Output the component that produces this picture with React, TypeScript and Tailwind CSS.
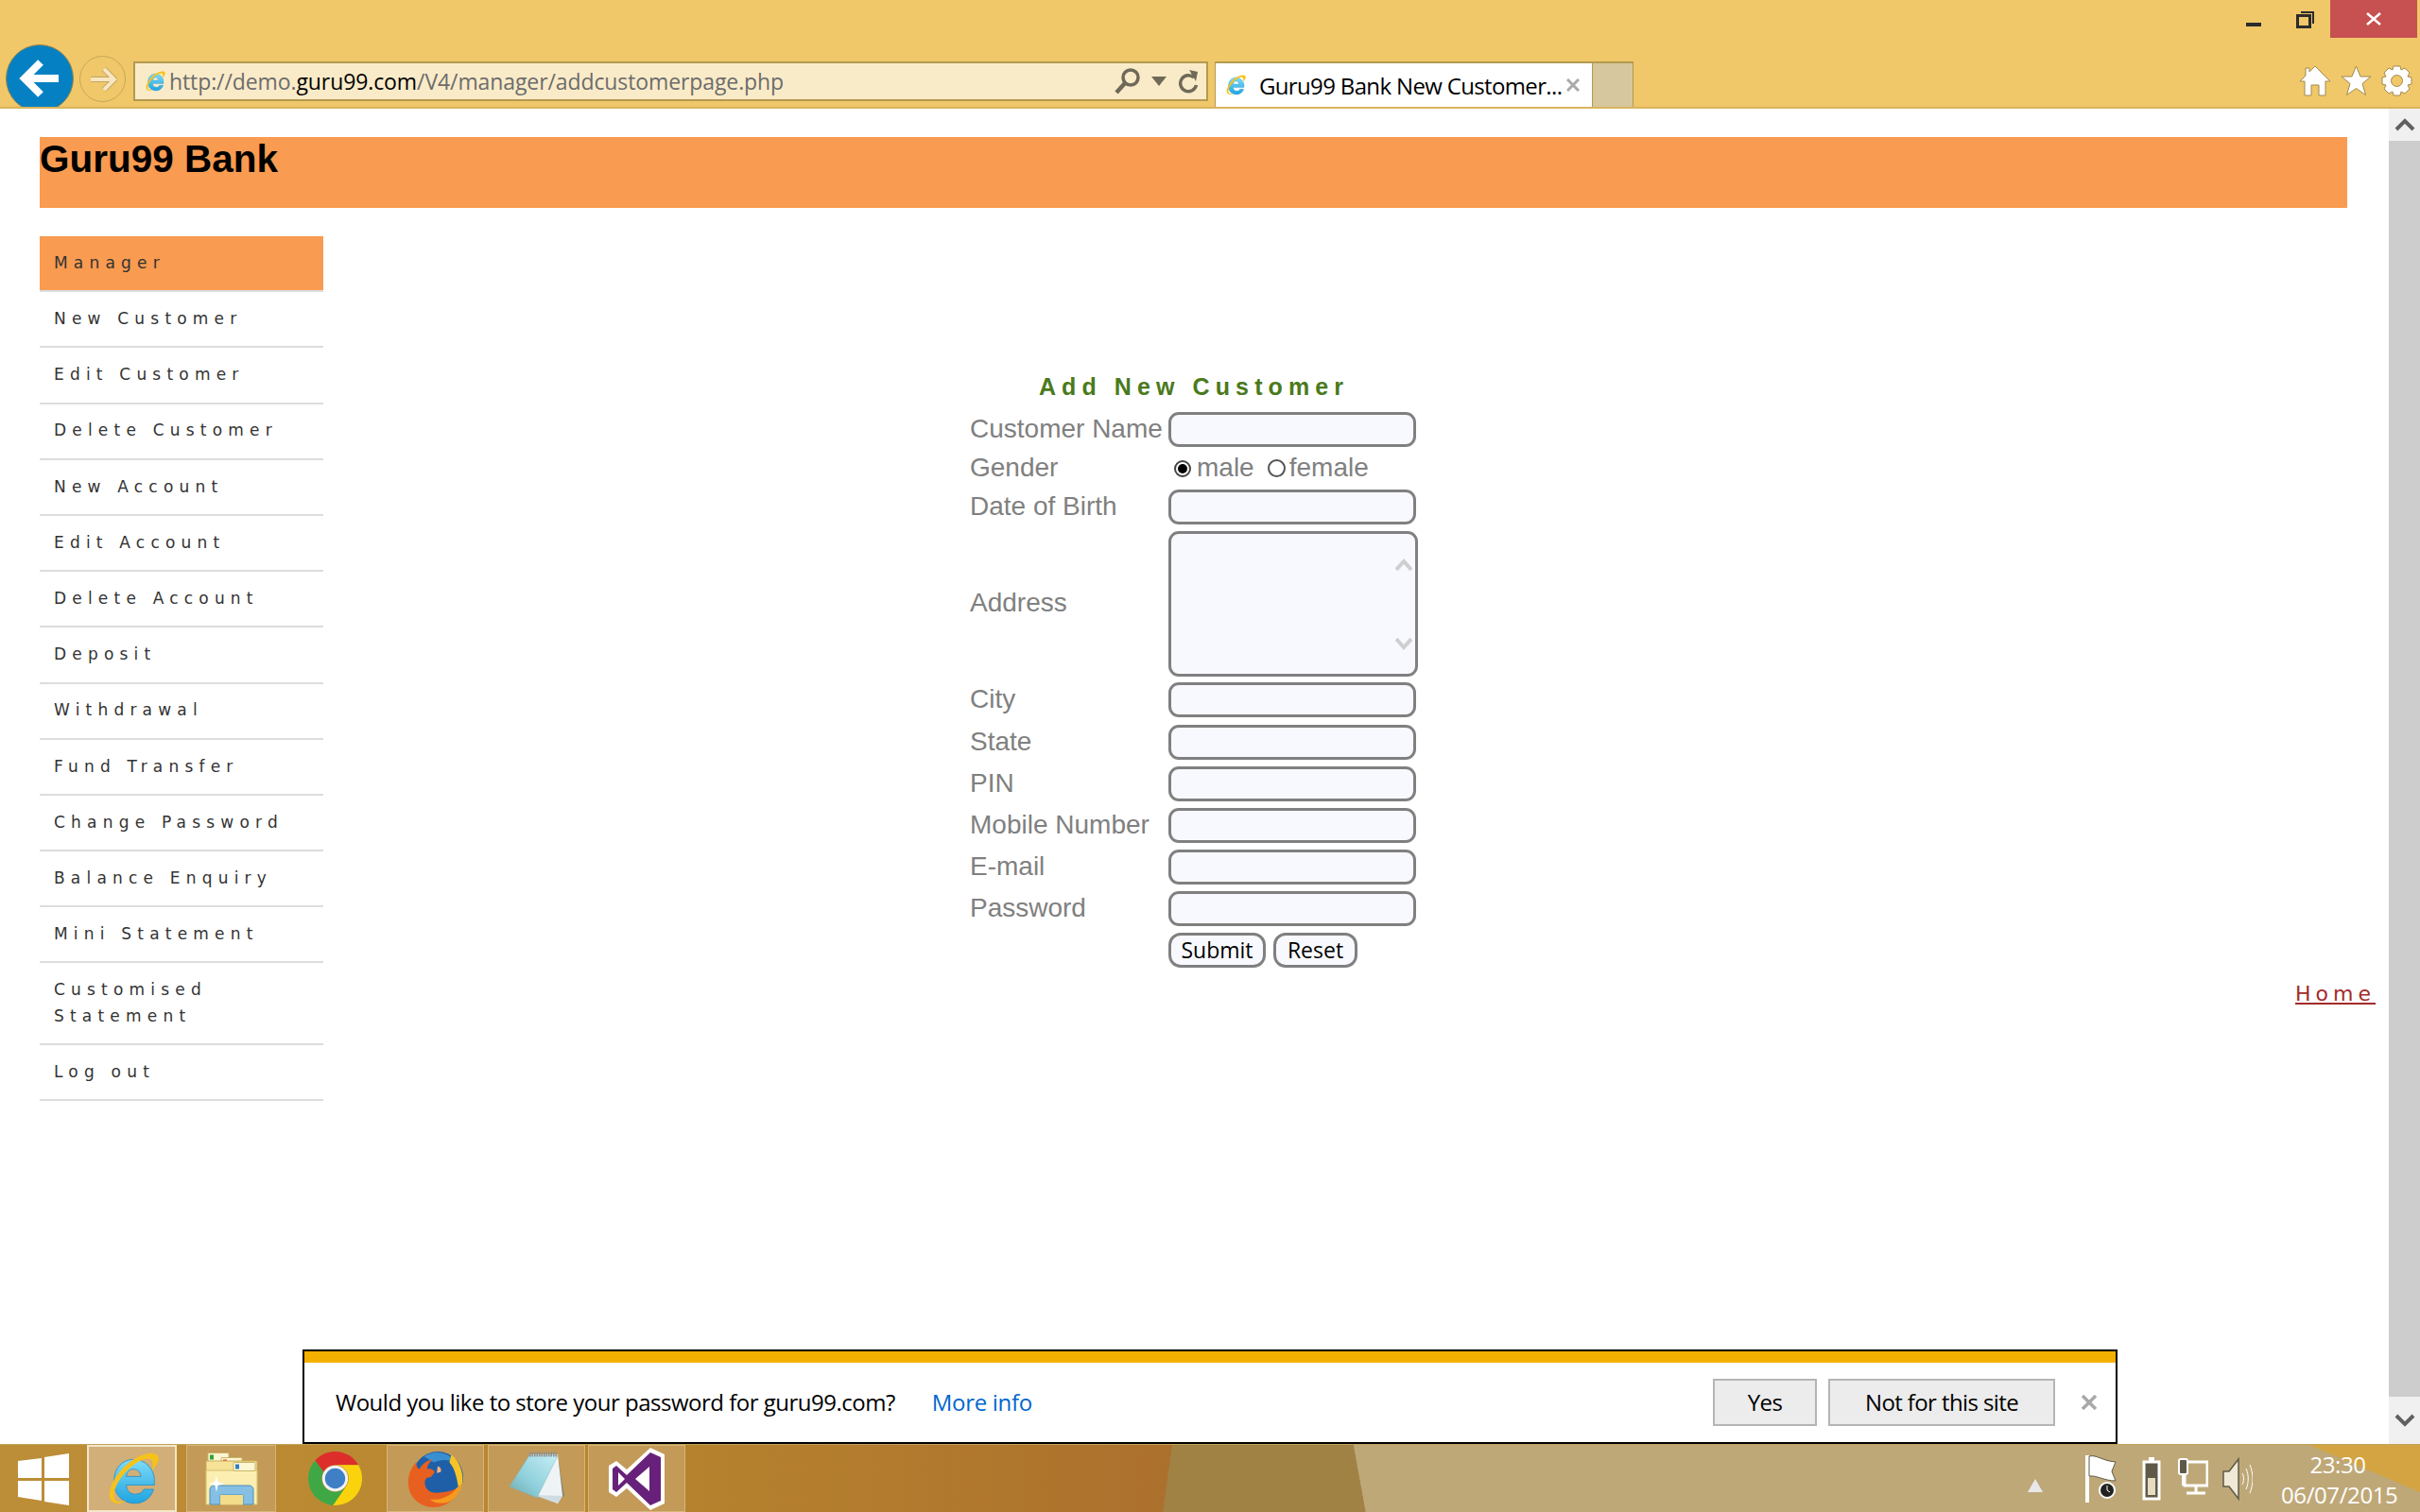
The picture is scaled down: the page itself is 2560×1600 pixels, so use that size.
import React from 'react';

const menuItems = [
  'New Customer',
  'Edit Customer',
  'Delete Customer',
  'New Account',
  'Edit Account',
  'Delete Account',
  'Deposit',
  'Withdrawal',
  'Fund Transfer',
  'Change Password',
  'Balance Enquiry',
  'Mini Statement',
  'Customised Statement',
  'Log out',
];

const IeIcon = ({ size }: { size: number }) => (
  <svg width={size} height={size} viewBox="0 0 48 48" className="shrink-0">
    <defs>
      <linearGradient id="ieBlue" x1="0" y1="0" x2="0" y2="1">
        <stop offset="0" stopColor="#7fdcf8" />
        <stop offset="1" stopColor="#1fa4e0" />
      </linearGradient>
    </defs>
    <path d="M25 8a17 17 0 0 1 17 18v3H19c.6 5 3.200 7.500 7.500 7.500 3.200 0 5.600-1.300 7-4h8C39 40 33 44 26 44 15.500 44 9 36.500 9 26S15.500 8 25 8zm0 8c-3.300 0-5.500 2.300-6 6h12c-.4-3.700-2.700-6-6-6z" fill="url(#ieBlue)" stroke="#1b8ccb" strokeWidth="0.6" />
    <path d="M7 42C2 37 8 21 22 10 32 3 42 1 45 5c2 3-1 8-5 12 1-4 1-8-1-9-4-2-13 2-21 11C11 27 7 36 10 41c1 2 5 2 9 0-4 4-9 4-12 1z" fill="#f6c21c" />
  </svg>
);

const FolderIcon = () => (
  <svg width="58" height="56" viewBox="0 0 58 56">
    <rect x="4" y="0.500" width="22" height="9" rx="1" fill="#fdf6d4" stroke="#c8b468" />
    <rect x="6" y="2.500" width="4" height="5" fill="#2fa62f" />
    <rect x="18" y="5.500" width="22" height="9" rx="1" fill="#fdf6d4" stroke="#c8b468" />
    <rect x="20" y="7.500" width="4" height="5" fill="#e0561c" />
    <path d="M2 9h54v46H2z" fill="#f6e397" stroke="#c9ae5c" />
    <path d="M2 19h54v36H2z" fill="#fbeeb0" stroke="#d6bd6c" />
    <rect x="31" y="10.500" width="23" height="9" rx="1" fill="#fdf6d4" stroke="#c8b468" />
    <rect x="33" y="12.500" width="4" height="5" fill="#2a7fc9" />
    <path d="M6 55V39c0-2 2-4 4-4h38c2 0 4 2 4 4v16H41V45H17v10z" fill="#85bfe4" stroke="#4b8fbd" />
    <path d="M17 45h24v10H17z" fill="#f3dc8a" />
    <path d="M13 24l1.500 7 6.500 2-6.500 2-1.500 7-1.500-7-6.500-2 6.500-2z" fill="#fff" />
  </svg>
);

const ChromeIcon = () => (
  <svg width="57" height="57" viewBox="0 0 48 48">
    <path d="M6.200 7.900A24 24 0 0 1 44.800 12H24a12 12 0 0 0-10.400 6z" fill="#dd2e2c" />
    <path d="M44.800 12A24 24 0 0 1 22 47.900L34.400 30A12 12 0 0 0 24 12z" fill="#fbd30d" />
    <path d="M6.200 7.900A24 24 0 0 0 22 47.900L34.400 30a12 12 0 0 1-20.800-12z" fill="#3fa845" />
    <circle cx="24" cy="24" r="11.500" fill="#f2f2f2" />
    <circle cx="24" cy="24" r="9" fill="#3f7fc6" />
  </svg>
);

const FirefoxIcon = () => (
  <svg width="64" height="64" viewBox="0 0 60 62">
    <circle cx="32" cy="29" r="26" fill="#1f5fa8" />
    <path d="M18 8c9-7 26-6 34 8-6-5-16-6-24-2z" fill="#3a8fd0" />
    <path d="M46 6c11 9 15 26 8 38-2-10-3-22-10-30z" fill="#f7c325" />
    <path d="M54 40c-5 15-17 21-29 20C10 58 0 46 2 31c1-8 4-13 8-17 0 3 1 6 3 7 3-5 8-9 14-10-4 3-6 7-6 10 3-1 6 0 8 3l-4 5c-5 0-7 3-6 8 1 6 7 9 14 8 7 0 14-2 21-5z" fill="#e8601f" />
    <path d="M56 36c-1 7-4 13-9 16-6 5-17 5-23 0 8 1 19-2 25-9 2-3 5-5 7-7z" fill="#f69a1e" />
    <path d="M32 18c3 1 4 3 3 6l-4 1z" fill="#f9b27c" />
  </svg>
);

const NotepadIcon = () => (
  <svg width="60" height="57" viewBox="0 0 60 57">
    <defs>
      <linearGradient id="padBlue" x1="1" y1="0" x2="0" y2="1">
        <stop offset="0" stopColor="#c6eef5" />
        <stop offset="0.6" stopColor="#8fd0dc" />
        <stop offset="1" stopColor="#6fa9ac" />
      </linearGradient>
    </defs>
    <path d="M52 4l7 43-6 3z" fill="#8d8a70" />
    <path d="M22 3h30l5 44-5 8-24-9z" fill="#eef3f5" />
    <path d="M27 46l25 9 5-8z" fill="#cfdde3" />
    <path d="M22 4h30L30 49 1 37z" fill="url(#padBlue)" stroke="#7fb0b8" strokeWidth="0.5" />
    <path d="M22 3h30" stroke="#8a9092" strokeWidth="5" strokeDasharray="1.500 1" />
  </svg>
);

const VsIcon = () => (
  <svg width="62" height="70" viewBox="0 0 62 70">
    <path d="M45 2 60 9v52l-15 7-25-23-11 9-8-5V21l8-5 11 9z" fill="#fff" />
    <path d="M45 7 56 12v46l-11 5-25-24-11 10-4-3V24l4-3 11 10z" fill="#68217a" />
    <path d="M44 22 29 35l15 13zM11 28v14l7-7z" fill="#fff" />
  </svg>
);

const TaskbarItem = ({ children, className }: { children: React.ReactNode; className: string }) => (
  <div className={`relative flex h-full items-center justify-center ${className}`}>{children}</div>
);

const FormRow = ({ label, children, className }: { label?: string; children: React.ReactNode; className: string }) => (
  <div className={`flex items-center ${className}`}>
    <div className="w-[210px] shrink-0 pb-[2px] text-[28px] leading-8 text-[#808080]">{label}</div>
    {children}
  </div>
);

const TextField = () => (
  <input type="text" className="h-[37px] w-[262px] rounded-[11px] border-[3px] border-[#808080] bg-[#f8f9ff]" />
);

const App: React.FC = () => {
  return (
    <div className="relative flex h-[1600px] w-[2560px] flex-col overflow-hidden bg-white font-['Liberation_Sans',sans-serif]">
      {/* browser chrome */}
      <header className="h-[115px] shrink-0 border-b-2 border-[#d9b45c] bg-[#f0c869] font-['Open_Sans',sans-serif]">
        <div className="flex h-[40px] justify-end pr-[3px]">
          <div className="mr-[37px] mt-[24px] h-[4px] w-[16px] bg-[#2b2b2b]" />
          <svg width="20" height="18" viewBox="0 0 20 18" className="mr-[16px] mt-[12px]">
            <path d="M5 1h13v12" fill="none" stroke="#2b2b2b" strokeWidth="2" />
            <rect x="1.500" y="4.500" width="13" height="12" fill="none" stroke="#2b2b2b" strokeWidth="3" />
          </svg>
          <div className="flex h-[40px] w-[92px] items-center justify-center bg-[#c75050]">
            <svg width="16" height="14" viewBox="0 0 16 14">
              <path d="M1 1l14 12M15 1 1 13" stroke="#fff" strokeWidth="2.500" />
            </svg>
          </div>
        </div>
        <div className="flex h-[73px] items-start overflow-hidden">
          <div className="ml-[6px] mt-[7px] flex h-[72px] w-[72px] shrink-0 items-center justify-center rounded-full border border-[#9b8547] bg-[#0581c3]">
            <svg width="44" height="40" viewBox="0 0 44 40">
              <path d="M42 20H6M23 3 6 20l17 17" fill="none" stroke="#fff" strokeWidth="8" />
            </svg>
          </div>
          <div className="ml-[6px] mt-[19px] flex h-[49px] w-[49px] shrink-0 items-center justify-center rounded-full border border-[#c4a659]">
            <svg width="30" height="28" viewBox="0 0 30 28">
              <path d="M2 14h24M16 3l11 11-11 11" fill="none" stroke="#bfa46a" strokeWidth="6" />
              <path d="M2 14h24M16 3l11 11-11 11" fill="none" stroke="#fae6be" strokeWidth="4" />
            </svg>
          </div>
          <div className="ml-[8px] mt-[25px] flex h-[42px] w-[1137px] shrink-0 items-center border-2 border-[#b39a50] bg-[#faebc8] pl-[9px]">
            <IeIcon size={24} />
            <div className="ml-[3px] flex-1 pt-[1px] text-[23px] leading-none tracking-[-0.1px] text-[#6c6c6c]">
              http://demo.<span className="text-black">guru99.com</span>/V4/manager/addcustomerpage.php
            </div>
            <svg width="30" height="28" viewBox="0 0 30 28">
              <circle cx="18" cy="10" r="8" fill="none" stroke="#6f6a58" strokeWidth="3.500" />
              <path d="M12 16 3 26" stroke="#6f6a58" strokeWidth="4.500" />
            </svg>
            <svg width="16" height="10" viewBox="0 0 16 10" className="ml-[10px]">
              <path d="M0 0h16L8 10z" fill="#6f6a58" />
            </svg>
            <svg width="22" height="26" viewBox="0 0 22 26" className="ml-[12px] mr-[8px]">
              <path d="M17 9a8.500 8.500 0 1 0 2.500 8" fill="none" stroke="#6f6a58" strokeWidth="3.500" />
              <path d="M12 1l9 2-2 10z" fill="#6f6a58" />
            </svg>
          </div>
          <div className="ml-[7px] mt-[25px] flex h-[48px] w-[400px] shrink-0 items-center border-x border-t-2 border-[#b39a50] bg-white pl-[9px]">
            <IeIcon size={24} />
            <span className="ml-[13px] w-[317px] whitespace-nowrap pt-[2px] text-[24px] leading-none tracking-[-0.65px] text-black">Guru99 Bank New Customer...</span>
            <svg width="14" height="14" viewBox="0 0 14 14" className="ml-[8px]">
              <path d="M1 1l12 12M13 1 1 13" stroke="#a9a9a9" strokeWidth="3" />
            </svg>
          </div>
          <div className="mt-[25px] h-[48px] w-[43px] shrink-0 border-r border-t-2 border-[#b39a50] bg-[#d6c79f]" />
          <div className="ml-auto mr-[8px] mt-[29px] flex items-center gap-[10px]">
            <svg width="34" height="33" viewBox="0 0 34 33">
              <path d="M17 1 33 17h-5v15h-7V21h-8v11H6V17H1L7 11V3h4v4z" fill="#fff" stroke="#a08a50" />
            </svg>
            <svg width="33" height="33" viewBox="0 0 33 33">
              <path d="M16.500 1l4.500 11h11l-9 7.500 3.500 12-10-7-10 7 3.500-12-9-7.500h11z" fill="#fff" stroke="#a08a50" />
            </svg>
            <svg width="33" height="33" viewBox="0 0 33 33">
              <path d="M13 1h7l1 4 4-2 5 5-2 4 4 1v7l-4 1 2 4-5 5-4-2-1 4h-7l-1-4-4 2-5-5 2-4-4-1v-7l4-1-2-4 5-5 4 2z" fill="#fff" stroke="#a08a50" />
              <circle cx="16.500" cy="16.500" r="6" fill="#f0c869" stroke="#a08a50" />
            </svg>
          </div>
        </div>
      </header>

      <div className="flex min-h-0 flex-1">
        {/* page */}
        <main className="w-[2527px] pl-[42px] pt-[30px]">
          <div className="h-[75px] w-[2441px] bg-[#f99b50] text-[40.500px] font-bold leading-[46px] text-black">Guru99 Bank</div>
          <div className="mt-[30px] flex">
            <nav className="w-[300px] shrink-0 font-['DejaVu_Sans',sans-serif] text-[17px] leading-[27.500px] tracking-[6.200px] text-[#333]">
              <div className="border-b-2 border-[#ddd] bg-[#f99b50] px-[15px] py-[14.850px]">Manager</div>
              {menuItems.map((item) => (
                <div key={item} className="border-b-2 border-[#ddd] px-[15px] py-[14.850px]">
                  {item}
                </div>
              ))}
            </nav>
            <div className="flex-1 pl-[684px] pt-[145px]">
              <div className="w-[474px] text-center text-[25px] font-bold leading-[28px] tracking-[6.100px] text-[#4a7a1c]">Add New Customer</div>
              <FormRow label="Customer Name" className="mt-[13px] h-[37px]"><TextField /></FormRow>
              <FormRow label="Gender" className="h-[45px]">
                <span className="ml-[6px] flex h-[18px] w-[18px] items-center justify-center rounded-full border-2 border-[#444]">
                  <span className="h-[10px] w-[10px] rounded-full bg-black" />
                </span>
                <span className="ml-[6px] pb-[2px] text-[28px] leading-8 text-[#808080]">male</span>
                <span className="ml-[14px] h-[19px] w-[19px] rounded-full border-2 border-[#555]" />
                <span className="ml-[4px] pb-[2px] text-[28px] leading-8 text-[#808080]">female</span>
              </FormRow>
              <FormRow label="Date of Birth" className="h-[37px]"><TextField /></FormRow>
              <FormRow label="Address" className="mt-[7px] h-[154px]">
                <div className="relative h-[154px] w-[264px]">
                  <textarea className="h-full w-full resize-none overflow-hidden rounded-[11px] border-[3px] border-[#808080] bg-[#f8f9ff]" />
                  <svg width="18" height="108" viewBox="0 0 18 108" className="absolute right-[6px] top-[28px]">
                    <path d="M1 13 9 4l8 9M1 86l8 9 8-9" fill="none" stroke="#cfcfcf" strokeWidth="4" />
                  </svg>
                </div>
              </FormRow>
              <FormRow label="City" className="mt-[6px] h-[37px]"><TextField /></FormRow>
              <FormRow label="State" className="mt-[8px] h-[37px]"><TextField /></FormRow>
              <FormRow label="PIN" className="mt-[7px] h-[37px]"><TextField /></FormRow>
              <FormRow label="Mobile Number" className="mt-[7px] h-[37px]"><TextField /></FormRow>
              <FormRow label="E-mail" className="mt-[7px] h-[37px]"><TextField /></FormRow>
              <FormRow label="Password" className="mt-[7px] h-[37px]"><TextField /></FormRow>
              <FormRow className="mt-[7px] h-[37px]">
                <button type="button" className="h-[37px] w-[103px] rounded-[13px] border-[3px] border-[#808080] bg-[#f8f9ff] font-['Open_Sans',sans-serif] text-[23px] leading-none text-black">Submit</button>
                <button type="button" className="ml-[8px] h-[37px] w-[89px] rounded-[13px] border-[3px] border-[#808080] bg-[#f8f9ff] font-['Open_Sans',sans-serif] text-[23px] leading-none text-black">Reset</button>
              </FormRow>
              <div className="mr-[14px] mt-[14px] text-right font-['DejaVu_Sans',sans-serif] text-[22px] leading-7 tracking-[5px] text-[#a52a2a] underline">Home</div>
            </div>
          </div>
        </main>

        {/* page scrollbar */}
        <div className="flex w-[33px] flex-col bg-[#f0f0f0]">
          <div className="flex h-[34px] items-center justify-center">
            <svg width="22" height="14" viewBox="0 0 22 14">
              <path d="M2 12 11 3l9 9" fill="none" stroke="#606060" strokeWidth="4" />
            </svg>
          </div>
          <div className="flex-1 bg-[#cdcdcd]" />
          <div className="flex h-[50px] items-center justify-center">
            <svg width="22" height="14" viewBox="0 0 22 14">
              <path d="M2 2l9 9 9-9" fill="none" stroke="#606060" strokeWidth="4" />
            </svg>
          </div>
        </div>
      </div>

      {/* password prompt */}
      <div className="absolute bottom-[72px] left-[320px] flex h-[100px] w-[1920px] flex-col border-2 border-black bg-white font-['Open_Sans',sans-serif]">
        <div className="h-[12px] bg-[#f4b000]" />
        <div className="flex flex-1 items-center pl-[33px] text-[24px] leading-none text-black">
          <span className="tracking-[-0.5px]">Would you like to store your password for guru99.com?</span>
          <span className="ml-[39px] tracking-[-0.3px] text-[#0066cc]">More info</span>
          <button type="button" className="ml-auto h-[50px] w-[110px] border-2 border-[#b5b5b5] bg-[#ececec] tracking-[-0.6px]">Yes</button>
          <button type="button" className="ml-[12px] h-[50px] w-[240px] border-2 border-[#b5b5b5] bg-[#ececec] tracking-[-0.6px]">Not for this site</button>
          <svg width="16" height="16" viewBox="0 0 16 16" className="ml-[28px] mr-[20px]">
            <path d="M1 1l14 14M15 1 1 15" stroke="#a9a9a9" strokeWidth="3.500" />
          </svg>
        </div>
      </div>

      {/* taskbar */}
      <footer className="relative z-10 flex h-[72px] shrink-0 items-center border-t border-[#c2a25c] bg-[#bfa878]">
        <svg width="2560" height="72" viewBox="0 0 2560 72" className="absolute left-0 top-0">
          <defs>
            <linearGradient id="wall" x1="0" y1="0" x2="1" y2="0">
              <stop offset="0" stopColor="#bd8e38" />
              <stop offset="0.5" stopColor="#b8862e" />
              <stop offset="1" stopColor="#ac702d" />
            </linearGradient>
          </defs>
          <rect width="1240" height="72" fill="url(#wall)" />
          <path d="M1240 0h192l13 72h-215z" fill="#a08244" />
          <path d="M1432 0h1128v72H1445z" fill="#bfa878" />
          <path d="M2443 0h117v50z" fill="#d3a441" />
        </svg>
        <TaskbarItem className="w-[92px]">
          <svg width="54" height="56" viewBox="0 0 54 56">
            <path d="M0 9 25 6v21H0zM28 5 54 1v26H28zM0 30h25v21L0 47zM28 30h26v26l-26-4z" fill="#fff" />
          </svg>
        </TaskbarItem>
        <TaskbarItem className="w-[95px] border-2 border-[#f3e6c8] bg-[#d2ae78]">
          <IeIcon size={62} />
        </TaskbarItem>
        <div className="h-full w-[7px] border-x border-[#e1c48e] bg-[#c79a55]" />
        <TaskbarItem className="ml-[3px] w-[95px] border border-[#d7b577] bg-[#c39a58]">
          <FolderIcon />
        </TaskbarItem>
        <div className="h-full w-[8px] border-r border-[#d7b577] bg-[#c39a58]" />
        <TaskbarItem className="w-[109px]">
          <ChromeIcon />
        </TaskbarItem>
        <TaskbarItem className="w-[103px] border border-[#d7b577] bg-[#c39a58]">
          <FirefoxIcon />
        </TaskbarItem>
        <TaskbarItem className="ml-[4px] w-[103px] border border-[#d7b577] bg-[#c39a58]">
          <NotepadIcon />
        </TaskbarItem>
        <TaskbarItem className="ml-[3px] w-[103px] border border-[#d7b577] bg-[#c39a58]">
          <VsIcon />
        </TaskbarItem>

        <div className="relative ml-auto flex h-full items-center pr-[27px]">
          <svg width="16" height="14" viewBox="0 0 16 14" className="mt-[14px]">
            <path d="M8 0 16 14H0z" fill="#e8e8ea" />
          </svg>
          <svg width="34" height="52" viewBox="0 0 34 52" className="ml-[44px]">
            <path d="M3 1v50" stroke="#fff" strokeWidth="4" />
            <path d="M5 2c8-2 14 5 28 6l-4 10 4 10c-12 0-20-6-28-5z" fill="#fff" stroke="#5f5a48" />
            <circle cx="24" cy="38" r="8" fill="#222" stroke="#fff" strokeWidth="2" />
            <path d="M24 33v5l3 2" fill="none" stroke="#fff" strokeWidth="1" />
          </svg>
          <svg width="20" height="46" viewBox="0 0 20 46" className="ml-[27px]">
            <rect x="2" y="5" width="16" height="39" fill="#5f5a48" stroke="#fff" strokeWidth="3" />
            <rect x="6" y="22" width="8" height="18" fill="#e6dcc0" />
            <rect x="7" y="0" width="6" height="4" fill="#fff" />
          </svg>
          <svg width="33" height="46" viewBox="0 0 33 46" className="ml-[17px]">
            <rect x="8" y="5" width="24" height="25" fill="#bfa878" stroke="#fff" strokeWidth="3" />
            <path d="M20 30v8M10 38h20" stroke="#fff" strokeWidth="3" />
            <rect x="2" y="2" width="9" height="16" rx="2" fill="#5f5a48" stroke="#fff" strokeWidth="2" />
            <path d="M6.500 18v12" stroke="#fff" strokeWidth="3" />
          </svg>
          <svg width="33" height="50" viewBox="0 0 33 50" className="ml-[14px]">
            <path d="M2 17h6L18 4v42L8 33H2z" fill="#efe9d6" stroke="#5f5a48" strokeWidth="1.500" />
            <path d="M22 19c2 4 2 8 0 12M26 14c3 7 3 15 0 22M30 10c4 10 4 20 0 30" fill="none" stroke="#fff" strokeWidth="1" />
          </svg>
          <div className="ml-[30px] w-[120px] whitespace-nowrap pt-[2px] text-center font-['Open_Sans',sans-serif] text-[24px] leading-8 tracking-[-0.4px] text-white">
            <div>23:30</div>
            <div>06/07/2015</div>
          </div>
        </div>
      </footer>
    </div>
  );
};

export default App;
